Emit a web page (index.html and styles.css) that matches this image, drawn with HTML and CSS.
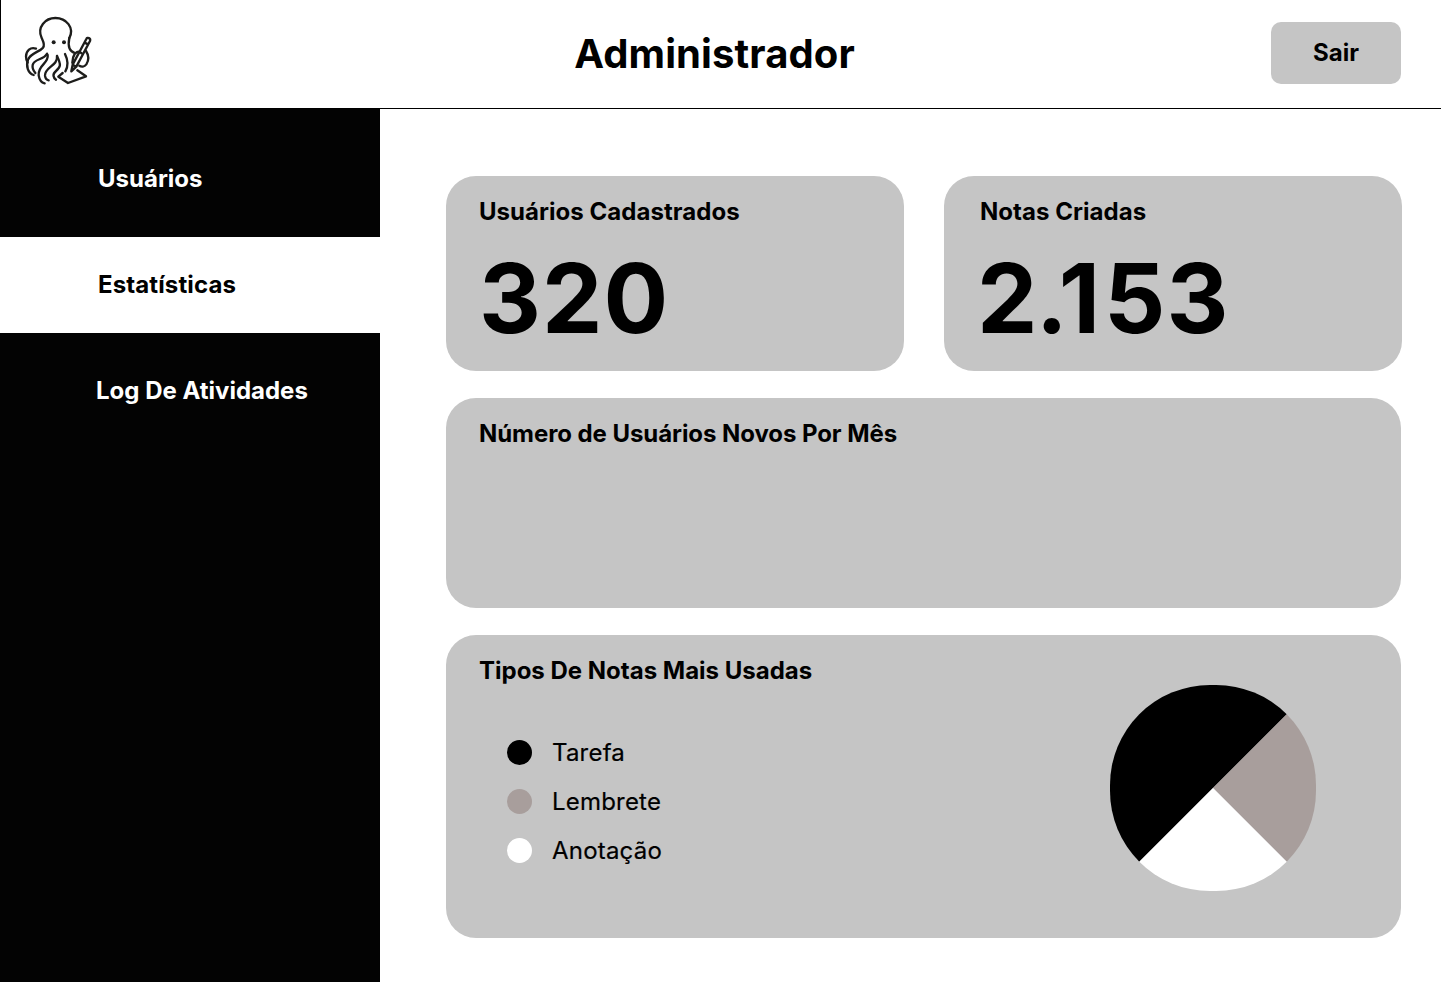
FILE: index.html
```html
<!DOCTYPE html>
<html lang="pt-BR">
<head>
<meta charset="utf-8">
<title>Administrador</title>
<link rel="stylesheet" href="styles.css">
</head>
<body>
<header class="topbar">
  <svg class="logo" viewBox="0 0 240 240" fill="none" stroke="#1d1d1b" stroke-width="7" stroke-linecap="round" stroke-linejoin="round">
    <path d="M54 116C37 110 25 122 24 139C24 148 26 154 29 158"/>
    <path d="M154 84C170 53 145 24 112 24C82 24 56 52 71 84C75 93 82 103 75 113C64 127 40 127 30 149C23 168 30 190 47 195"/>
    <path d="M87 131C77 151 48 145 44 165C42 176 47 183 52 189"/>
    <path d="M89 135C93 160 59 165 62 196C64 209 71 218 80 220"/>
    <path d="M117 138C121 167 79 172 81 197C82 205 86 210 92 211"/>
    <path d="M117 138C130 165 128 171 114 183C102 193 106 204 114 209"/>
    <path d="M141 132C150 150 152 167 142 184"/>
    <path d="M154 84C150 103 152 124 172 130M170 132C164 141 163 149 163 158M172 130C179 123 186 125 191 130M204 123C213 137 212 152 205 163C199 171 190 171 184 167"/>
    <path d="M134 189L121 200L150 219L204 199L178 181"/>
    <path d="M160 184L164 164L205 87C208 80 219 85 216 93L175 170ZM164 164L175 170M200 98L210 103"/>
    <circle cx="107" cy="97" r="6" fill="#1d1d1b" stroke="none"/>
    <circle cx="138" cy="97" r="6" fill="#1d1d1b" stroke="none"/>
  </svg>
  <h1 class="page-title">Administrador</h1>
  <button class="logout" type="button">Sair</button>
</header>
<div class="layout">
  <nav class="sidebar">
    <a class="nav-item nav-users">Usuários</a>
    <a class="nav-item nav-active">Estatísticas</a>
    <a class="nav-item nav-log">Log De Atividades</a>
  </nav>
  <main class="content">
    <div class="totals">
      <section class="card total">
        <h2 class="card-title">Usuários Cadastrados</h2>
        <p class="figure">320</p>
      </section>
      <section class="card total total-notes">
        <h2 class="card-title">Notas Criadas</h2>
        <p class="figure figure-notes"><span class="kern-two">2</span><span class="kern-dot">.</span><span class="kern-one">1</span>53</p>
      </section>
    </div>
    <section class="card monthly">
      <h2 class="card-title">Número de Usuários Novos Por Mês</h2>
    </section>
    <section class="card types">
      <div>
        <h2 class="card-title">Tipos De Notas Mais Usadas</h2>
        <ul class="legend">
          <li class="legend-item"><span class="dot dot-task"></span>Tarefa</li>
          <li class="legend-item"><span class="dot dot-reminder"></span>Lembrete</li>
          <li class="legend-item"><span class="dot dot-note"></span>Anotação</li>
        </ul>
      </div>
      <svg class="pie" viewBox="0 0 206 206">
        <path fill="#000" d="M0 0H206L0 206Z"/>
        <path fill="#a89e9c" d="M206 0V206L103 103Z"/>
        <path fill="#fff" d="M206 206H0L103 103Z"/>
      </svg>
    </section>
  </main>
</div>
</body>
</html>
```
FILE: styles.css
```css
* { box-sizing: border-box; }
body {
  margin: 0;
  height: 982px;
  display: flex;
  flex-direction: column;
  overflow: hidden;
  background: #fff;
  color: #000;
  font-family: Inter, "Liberation Sans", sans-serif;
}
h1, h2, p, ul { margin: 0; padding: 0; }
.topbar {
  height: 109px;
  flex: none;
  display: grid;
  grid-template-columns: 190px 1fr 190px;
  align-items: start;
  border-left: 1px solid #000;
  border-bottom: 1px solid #000;
  padding: 0 40px 0 17px;
}
.logo { width: 80px; height: 80px; margin-top: 10px; }
.page-title {
  justify-self: center;
  margin: 30px 0 0 10px;
  font-size: 40px;
  line-height: 48px;
  font-weight: 700;
  letter-spacing: 0.1px;
}
.logout {
  justify-self: end;
  width: 130px;
  height: 62px;
  margin-top: 22px;
  padding: 0 0 2px;
  border: 0;
  border-radius: 10px;
  background: #c5c5c5;
  color: #000;
  font: 700 24px/29px Inter, "Liberation Sans", sans-serif;
}
.layout { flex: 1; display: flex; }
.sidebar {
  width: 380px;
  flex: none;
  padding-top: 43px;
  background: #030303;
}
.nav-item {
  display: flex;
  align-items: center;
  padding-left: 98px;
  color: #fff;
  font-size: 24px;
  line-height: 29px;
  font-weight: 700;
}
.nav-users { height: 53px; margin-bottom: 32px; }
.nav-active {
  height: 96px;
  padding-bottom: 1px;
  background: #fff;
  color: #000;
  letter-spacing: 0.12px;
}
.nav-log { height: 53px; margin-top: 31px; padding-left: 96px; }
.content {
  width: 956px;
  margin: 67px 0 0 66px;
  display: flex;
  flex-direction: column;
  gap: 27px;
}
.card { border-radius: 30px; background: #c5c5c5; padding: 21px 32px 0 33px; }
.totals { display: flex; gap: 40px; }
.total { width: 458px; height: 195px; }
.total-notes { padding-left: 36px; }
.card-title { font-size: 24px; line-height: 29px; font-weight: 700; }
.total .card-title { letter-spacing: 0.04px; }
.monthly .card-title { letter-spacing: -0.07px; }
.figure {
  margin-top: 14px;
  font-size: 96px;
  line-height: 116px;
  font-weight: 700;
  letter-spacing: 1px;
}
.figure-notes { margin-left: -3px; }
.kern-two { letter-spacing: -1.7px; }
.kern-dot { letter-spacing: -9px; }
.kern-one { letter-spacing: 3.8px; }
.monthly { width: 955px; height: 210px; }
.types {
  width: 955px;
  height: 303px;
  display: flex;
  justify-content: space-between;
  padding-right: 85px;
}
.legend {
  list-style: none;
  margin: 53px 0 0 28px;
  display: grid;
  gap: 20px;
}
.legend-item {
  height: 29px;
  display: flex;
  align-items: center;
  gap: 20px;
  font-size: 24px;
  line-height: 29px;
  letter-spacing: 0.2px;
  -webkit-text-stroke: 0.2px #000;
}
.dot { width: 25px; height: 25px; border-radius: 50%; }
.dot-task { background: #000; }
.dot-reminder { background: #a89e9c; }
.dot-note { background: #fff; }
.pie { width: 206px; height: 206px; margin-top: 29px; border-radius: 100px; }
```
